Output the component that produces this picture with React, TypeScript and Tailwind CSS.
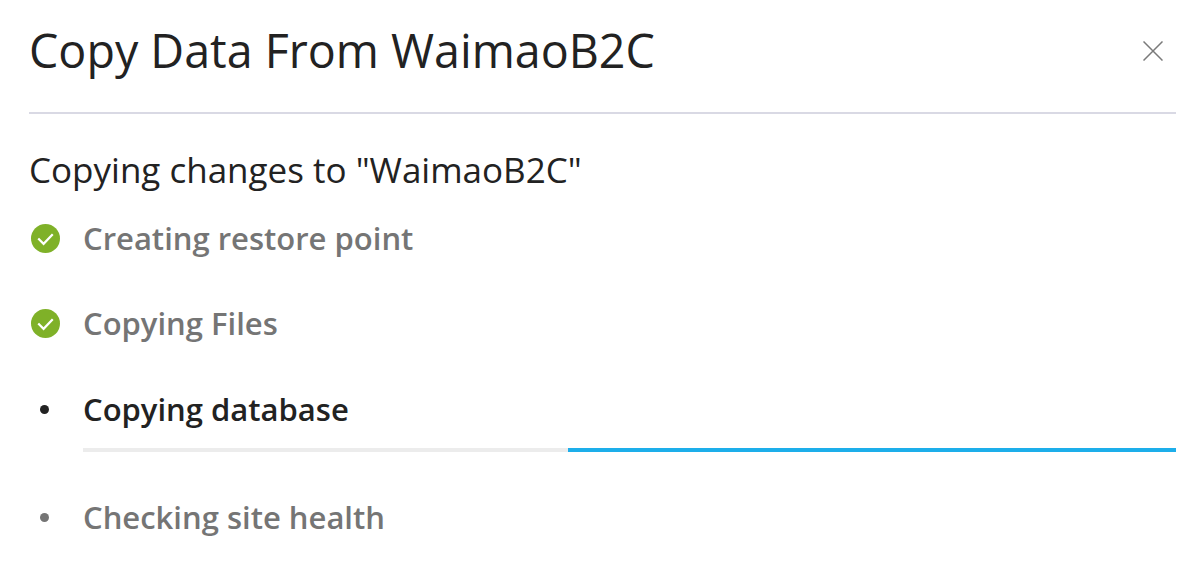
function Check() {
  return (
    <span className="w-[54px] h-[48px] flex items-center pl-[2px]">
      <svg width="29" height="29" viewBox="0 0 30 30">
        <circle cx="15" cy="15" r="15" fill="#7fb128" />
        <path d="M7.5 15 L13 20.5 L22.5 10.5" fill="none" stroke="#fff" strokeWidth="2.3" />
      </svg>
    </span>
  );
}

export default function App() {
  return (
    <div className="w-[1200px] h-[570px] bg-white pl-[29px] pr-[24px] overflow-hidden font-['Open_Sans',sans-serif]">
      <header className="h-[114px] flex items-start justify-between border-b-2 border-[#d9d9e4]">
        <h1 className="mt-[18px] text-[46.6px] leading-[65px] font-normal text-[#222222]">Copy Data From WaimaoB2C</h1>
        <svg className="mt-[41px] mr-[13px]" width="20" height="20" viewBox="0 0 20 20" fill="none" stroke="#7a7a7a" strokeWidth="1.5">
          <path d="M0.5 0.5 L19.5 19.5 M19.5 0.5 L0.5 19.5" />
        </svg>
      </header>
      <p className="mt-[32px] text-[35px] leading-[48px] text-[#222222]">Copying changes to "WaimaoB2C"</p>
      <ul className="mt-[20px]">
        <li className="h-[85px] flex items-start">
          <Check />
          <span className="text-[31px] leading-[48px] font-semibold text-[#757575]">Creating restore point</span>
        </li>
        <li className="h-[86px] flex items-start">
          <Check />
          <span className="text-[31px] leading-[48px] font-semibold text-[#757575]">Copying Files</span>
        </li>
        <li className="flex items-start">
          <span className="w-[54px] h-[48px] flex items-center pl-[11px]">
            <span className="w-[9px] h-[9px] rounded-full bg-[#222222]" />
          </span>
          <div className="flex-1">
            <div className="text-[31px] leading-[48px] font-semibold text-[#222222]">Copying database</div>
            <div className="mt-[15px] h-[4px] bg-[#ececec] flex justify-end">
              <div className="w-[608px] h-full bg-[#1daeea]" />
            </div>
          </div>
        </li>
        <li className="mt-[41px] flex items-start">
          <span className="w-[54px] h-[48px] flex items-center pl-[11px]">
            <span className="w-[9px] h-[9px] rounded-full bg-[#757575]" />
          </span>
          <span className="text-[31px] leading-[48px] font-semibold text-[#757575]">Checking site health</span>
        </li>
      </ul>
    </div>
  );
}
